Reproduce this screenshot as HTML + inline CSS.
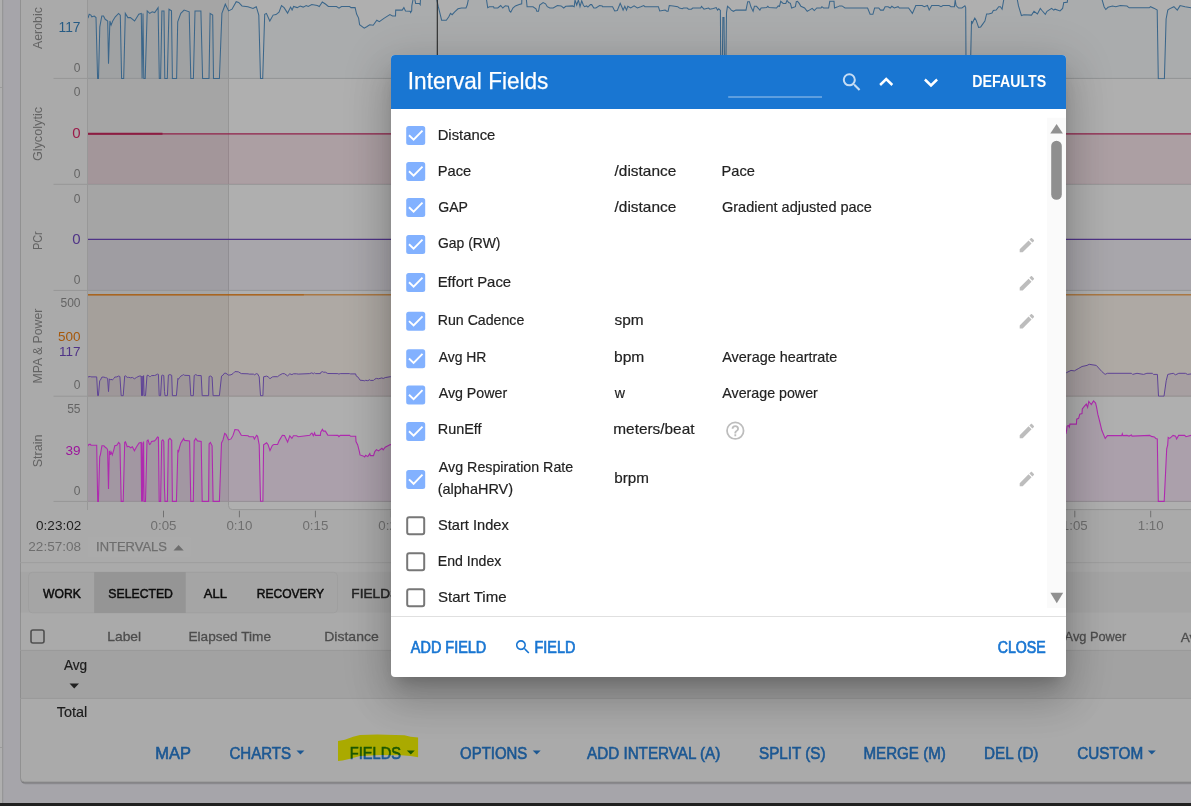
<!DOCTYPE html>
<html><head><meta charset="utf-8"><title>Interval Fields</title>
<style>
html,body{margin:0;padding:0;}
body{width:1191px;height:806px;overflow:hidden;position:relative;font-family:'Liberation Sans', sans-serif;background:#f3f3f8;}
#ov{position:absolute;left:0;top:0;width:1191px;height:806px;background:rgb(33,33,33);opacity:0.36;}
#dlg{position:absolute;left:391px;top:55px;width:675px;height:622px;background:#fff;border-radius:4px;overflow:hidden;
box-shadow:0 11px 15px -7px rgba(0,0,0,.2),0 24px 38px 3px rgba(0,0,0,.14),0 9px 46px 8px rgba(0,0,0,.12);}
#bar{position:absolute;left:0;top:803px;width:1191px;height:3px;background:#202020;}
</style></head><body>
<svg width="1191" height="806" viewBox="0 0 1191 806" style="position:absolute;left:0;top:0;font-family:'Liberation Sans', sans-serif"><defs><clipPath id="c0"><rect x="87.5" y="-30" width="1200" height="109.2"/></clipPath><clipPath id="c1"><rect x="87.5" y="78.4" width="1200" height="105.9"/></clipPath><clipPath id="c2"><rect x="87.5" y="184.3" width="1200" height="106.09999999999997"/></clipPath><clipPath id="c3"><rect x="87.5" y="290.4" width="1200" height="106.40000000000003"/></clipPath><clipPath id="c4"><rect x="87.5" y="396.2" width="1200" height="106.0"/></clipPath></defs><rect x="0" y="0" width="1191" height="806" fill="#f1f0f8"/><rect x="0" y="0" width="2.5" height="806" fill="#ffffff"/><rect x="2.2" y="0" width="1" height="806" fill="#d0d0d0"/><rect x="0" y="87" width="2.2" height="1" fill="#e0e0e0"/><rect x="0" y="747" width="2.2" height="1" fill="#e0e0e0"/><rect x="20.5" y="-19" width="1200" height="802.5" rx="4.5" fill="#000" fill-opacity="0.22"/><rect x="20.5" y="-19" width="1200" height="803.5" rx="5" fill="#000" fill-opacity="0.08"/><rect x="20.5" y="-20" width="1200" height="802" rx="4" fill="#f8f8f8" stroke="#d0d0d0" stroke-width="1"/><rect x="87.5" y="-5" width="140.5" height="506.6" fill="#000" fill-opacity="0.03"/><rect x="228.5" y="-10" width="1000" height="519.6" rx="4" fill="#ffffff" stroke="#d8d8d8" stroke-width="1"/><line x1="53.5" y1="78.4" x2="1195" y2="78.4" stroke="#d8d8d8" stroke-width="1"/><line x1="53.5" y1="184.3" x2="1195" y2="184.3" stroke="#d8d8d8" stroke-width="1"/><line x1="53.5" y1="290.4" x2="1195" y2="290.4" stroke="#d8d8d8" stroke-width="1"/><line x1="53.5" y1="396.2" x2="1195" y2="396.2" stroke="#d8d8d8" stroke-width="1"/><line x1="53.5" y1="501.4" x2="1195" y2="501.4" stroke="#d8d8d8" stroke-width="1"/><g clip-path="url(#c0)"><path d="M86.5,78.9 L86.5,17.6 L88.1,17.6 L89.2,14.3 L90.9,15.1 L91.8,16.8 L94.3,16.0 L96.0,17.6 L97.6,78.4 L98.5,78.4 L99.8,26.9 L101.8,16.0 L103.5,16.0 L105.2,19.3 L107.7,21.0 L108.5,63.8 L109.9,21.0 L111.1,25.2 L112.7,21.0 L115.3,16.8 L118.6,13.4 L120.3,15.1 L121.6,78.4 L123.7,78.4 L125.3,13.4 L127.9,17.6 L130.4,17.6 L134.6,21.0 L138.8,14.3 L141.3,13.4 L142.1,78.4 L143.0,13.4 L143.8,78.4 L145.2,78.4 L147.2,10.9 L149.7,13.4 L152.2,11.8 L154.7,12.6 L158.1,7.6 L159.3,78.4 L160.6,78.4 L161.9,10.9 L164.0,10.9 L164.8,78.4 L167.3,78.4 L169.0,9.2 L171.5,10.9 L172.4,78.4 L176.6,78.4 L177.7,21.8 L180.8,13.4 L184.1,10.1 L189.2,11.8 L190.8,78.4 L193.4,78.4 L195.0,10.9 L200.9,10.9 L202.6,78.4 L209.0,78.4 L210.1,13.4 L212.7,15.1 L213.5,78.4 L219.4,78.4 L221.9,13.4 L225.3,4.2 L228.6,10.9 L232.0,9.2 L236.2,1.7 L238.7,2.5 L242.0,5.9 L247.9,6.7 L253.0,8.4 L256.3,6.7 L258.8,15.1 L260.5,78.4 L262.7,78.4 L264.7,14.3 L266.4,13.4 L269.8,21.0 L273.1,15.1 L276.0,14.6 L279.0,12.1 L281.5,5.5 L284.1,7.6 L287.6,13.1 L290.6,7.1 L292.1,10.1 L293.6,6.5 L297.2,7.6 L300.2,6.0 L303.2,7.1 L306.2,5.5 L308.2,6.5 L311.8,4.5 L317.3,5.5 L319.3,6.5 L322.3,2.0 L325.4,4.0 L328.4,6.5 L336.5,6.5 L339.0,8.1 L341.5,6.5 L349.6,6.5 L351.1,7.6 L355.1,7.6 L356.6,14.1 L358.6,18.1 L359.6,24.7 L364.2,28.2 L366.7,26.7 L369.7,24.7 L373.2,25.2 L376.8,20.2 L379.3,21.7 L384.3,18.1 L389.9,14.6 L392.5,16.0 L395.5,16.0 L395.7,10.1 L402.2,10.1 L403.9,7.6 L405.5,10.9 L410.2,11.3 L410.6,12.6 L411.7,10.9 L411.8,5.9 L413.5,-3.0 L415.2,0.8 L415.6,3.4 L419.4,3.4 L420.2,4.6 L420.6,-3.0 L436.2,-3.0 L438.3,6.7 L440.4,15.1 L441.6,20.2 L446.3,20.2 L448.8,16.8 L450.5,13.4 L452.1,14.7 L454.7,11.8 L458.0,8.8 L461.4,8.0 L466.0,8.0 L467.2,5.0 L468.9,-3.0 L486.1,-3.0 L487.7,7.6 L489.4,6.7 L493.6,6.7 L494.0,8.0 L497.8,8.0 L500.7,5.5 L502.8,8.0 L505.3,5.7 L508.3,6.3 L509.5,10.9 L510.8,12.2 L512.9,8.0 L515.4,5.9 L519.2,4.6 L521.7,3.8 L521.9,-3.0 L526.1,-3.0 L527.1,6.7 L533.0,6.7 L536.0,8.8 L536.8,11.3 L538.5,11.3 L539.7,5.0 L543.1,2.5 L545.6,3.8 L547.3,6.7 L549.8,8.0 L553.2,8.0 L557.4,5.5 L561.1,5.9 L563.7,8.0 L565.8,6.3 L572.5,5.9 L574.2,6.7 L575.0,0.0 L576.7,5.0 L578.4,0.0 L580.0,6.7 L581.7,0.8 L583.3,5.0 L584.5,6.7 L586.6,5.9 L587.9,7.1 L590.4,4.6 L591.7,4.6 L593.8,8.0 L595.9,8.0 L599.6,5.5 L602.2,5.9 L602.6,6.7 L612.6,6.7 L614.7,10.9 L617.3,10.5 L620.2,3.4 L622.3,8.0 L623.1,10.1 L624.8,6.3 L626.5,10.1 L627.8,6.3 L630.7,8.0 L634.1,5.9 L637.4,8.0 L640.8,6.7 L643.7,5.5 L645.0,6.7 L658.4,6.7 L659.7,10.9 L662.6,10.5 L665.1,10.1 L666.8,11.3 L668.1,11.3 L669.3,5.5 L673.1,5.9 L677.7,6.7 L679.4,8.0 L682.2,8.8 L683.5,8.0 L687.2,8.0 L688.5,9.2 L691.4,9.2 L692.7,8.0 L700.7,8.0 L701.5,6.5 L704.0,9.2 L706.5,8.4 L708.6,8.0 L709.9,9.2 L713.3,8.4 L716.2,7.6 L717.5,10.1 L718.7,8.8 L720.4,10.5 L720.8,78.9 L722.1,78.9 L722.9,17.6 L724.0,17.6 L724.6,78.9 L725.7,78.9 L726.5,12.6 L727.5,6.3 L729.6,8.0 L731.3,10.1 L733.4,11.3 L735.9,10.1 L746.0,10.1 L747.7,1.7 L749.4,1.7 L751.0,7.1 L753.1,11.3 L754.4,6.3 L756.5,6.3 L759.9,10.1 L761.1,8.0 L766.6,7.6 L767.8,6.3 L769.1,7.6 L776.5,8.0 L778.2,5.9 L779.5,6.3 L780.7,1.3 L783.2,3.4 L785.8,3.4 L787.0,0.4 L788.7,2.5 L790.4,3.4 L791.6,8.0 L795.4,6.7 L796.3,1.7 L797.5,1.3 L799.2,3.4 L800.9,6.3 L804.6,8.0 L807.2,11.3 L809.3,10.1 L812.2,8.4 L814.3,10.5 L816.8,8.0 L821.0,8.0 L821.9,6.7 L823.5,8.0 L828.6,8.0 L829.8,1.3 L834.0,1.3 L834.5,8.0 L837.0,7.1 L839.5,5.9 L842.0,5.9 L845.0,8.0 L867.6,8.0 L870.1,14.3 L872.9,14.3 L874.6,8.0 L878.8,8.0 L880.5,10.1 L883.4,10.1 L885.1,6.7 L888.1,6.7 L890.2,8.0 L891.8,6.3 L894.3,8.0 L898.1,6.7 L899.4,8.0 L908.6,8.0 L912.4,13.4 L915.3,6.7 L915.8,5.5 L922.1,5.5 L924.2,6.7 L927.5,5.5 L929.2,10.1 L931.7,5.5 L938.8,5.5 L941.0,6.7 L943.0,5.5 L949.3,5.5 L951.0,6.7 L954.4,6.7 L955.2,0.0 L956.1,5.5 L958.6,8.0 L961.9,8.0 L964.9,5.9 L965.7,7.6 L966.1,78.9 L970.2,78.9 L971.5,21.0 L972.3,23.1 L974.8,18.1 L976.1,20.2 L978.6,27.3 L980.7,26.9 L984.9,21.0 L986.6,13.9 L988.7,13.9 L992.0,13.0 L993.3,10.5 L996.2,10.1 L998.7,6.7 L1000.4,6.7 L1002.1,9.2 L1003.4,1.7 L1004.2,-3.0 L1016.8,-3.0 L1018.5,5.9 L1021.4,15.5 L1023.9,14.7 L1031.5,15.1 L1034.0,11.3 L1037.4,13.9 L1040.3,8.4 L1042.0,10.5 L1045.3,14.3 L1047.0,11.3 L1051.6,8.4 L1053.7,10.1 L1055.0,9.2 L1060.0,10.9 L1062.6,8.4 L1063.8,2.5 L1066.0,2.5 L1066.0,2.2 L1067.3,2.2 L1067.8,-3.0 L1101.3,-3.0 L1104.1,6.7 L1105.8,9.5 L1108.0,7.3 L1112.5,6.1 L1115.8,6.7 L1120.3,5.6 L1127.0,6.1 L1129.2,7.8 L1149.3,7.8 L1150.5,6.7 L1154.4,8.4 L1157.2,10.1 L1158.3,78.7 L1164.4,78.7 L1166.1,19.0 L1167.8,10.1 L1169.4,8.9 L1173.9,6.7 L1177.3,10.1 L1180.1,5.6 L1185.1,6.7 L1191.0,7.8 L1196.0,7.8 L1196.0,78.9 Z" fill="#1f6fb0" fill-opacity="0.035"/><path d="M86.5,17.6 L88.1,17.6 L89.2,14.3 L90.9,15.1 L91.8,16.8 L94.3,16.0 L96.0,17.6 L97.6,78.4 L98.5,78.4 L99.8,26.9 L101.8,16.0 L103.5,16.0 L105.2,19.3 L107.7,21.0 L108.5,63.8 L109.9,21.0 L111.1,25.2 L112.7,21.0 L115.3,16.8 L118.6,13.4 L120.3,15.1 L121.6,78.4 L123.7,78.4 L125.3,13.4 L127.9,17.6 L130.4,17.6 L134.6,21.0 L138.8,14.3 L141.3,13.4 L142.1,78.4 L143.0,13.4 L143.8,78.4 L145.2,78.4 L147.2,10.9 L149.7,13.4 L152.2,11.8 L154.7,12.6 L158.1,7.6 L159.3,78.4 L160.6,78.4 L161.9,10.9 L164.0,10.9 L164.8,78.4 L167.3,78.4 L169.0,9.2 L171.5,10.9 L172.4,78.4 L176.6,78.4 L177.7,21.8 L180.8,13.4 L184.1,10.1 L189.2,11.8 L190.8,78.4 L193.4,78.4 L195.0,10.9 L200.9,10.9 L202.6,78.4 L209.0,78.4 L210.1,13.4 L212.7,15.1 L213.5,78.4 L219.4,78.4 L221.9,13.4 L225.3,4.2 L228.6,10.9 L232.0,9.2 L236.2,1.7 L238.7,2.5 L242.0,5.9 L247.9,6.7 L253.0,8.4 L256.3,6.7 L258.8,15.1 L260.5,78.4 L262.7,78.4 L264.7,14.3 L266.4,13.4 L269.8,21.0 L273.1,15.1 L276.0,14.6 L279.0,12.1 L281.5,5.5 L284.1,7.6 L287.6,13.1 L290.6,7.1 L292.1,10.1 L293.6,6.5 L297.2,7.6 L300.2,6.0 L303.2,7.1 L306.2,5.5 L308.2,6.5 L311.8,4.5 L317.3,5.5 L319.3,6.5 L322.3,2.0 L325.4,4.0 L328.4,6.5 L336.5,6.5 L339.0,8.1 L341.5,6.5 L349.6,6.5 L351.1,7.6 L355.1,7.6 L356.6,14.1 L358.6,18.1 L359.6,24.7 L364.2,28.2 L366.7,26.7 L369.7,24.7 L373.2,25.2 L376.8,20.2 L379.3,21.7 L384.3,18.1 L389.9,14.6 L392.5,16.0 L395.5,16.0 L395.7,10.1 L402.2,10.1 L403.9,7.6 L405.5,10.9 L410.2,11.3 L410.6,12.6 L411.7,10.9 L411.8,5.9 L413.5,-3.0 L415.2,0.8 L415.6,3.4 L419.4,3.4 L420.2,4.6 L420.6,-3.0 L436.2,-3.0 L438.3,6.7 L440.4,15.1 L441.6,20.2 L446.3,20.2 L448.8,16.8 L450.5,13.4 L452.1,14.7 L454.7,11.8 L458.0,8.8 L461.4,8.0 L466.0,8.0 L467.2,5.0 L468.9,-3.0 L486.1,-3.0 L487.7,7.6 L489.4,6.7 L493.6,6.7 L494.0,8.0 L497.8,8.0 L500.7,5.5 L502.8,8.0 L505.3,5.7 L508.3,6.3 L509.5,10.9 L510.8,12.2 L512.9,8.0 L515.4,5.9 L519.2,4.6 L521.7,3.8 L521.9,-3.0 L526.1,-3.0 L527.1,6.7 L533.0,6.7 L536.0,8.8 L536.8,11.3 L538.5,11.3 L539.7,5.0 L543.1,2.5 L545.6,3.8 L547.3,6.7 L549.8,8.0 L553.2,8.0 L557.4,5.5 L561.1,5.9 L563.7,8.0 L565.8,6.3 L572.5,5.9 L574.2,6.7 L575.0,0.0 L576.7,5.0 L578.4,0.0 L580.0,6.7 L581.7,0.8 L583.3,5.0 L584.5,6.7 L586.6,5.9 L587.9,7.1 L590.4,4.6 L591.7,4.6 L593.8,8.0 L595.9,8.0 L599.6,5.5 L602.2,5.9 L602.6,6.7 L612.6,6.7 L614.7,10.9 L617.3,10.5 L620.2,3.4 L622.3,8.0 L623.1,10.1 L624.8,6.3 L626.5,10.1 L627.8,6.3 L630.7,8.0 L634.1,5.9 L637.4,8.0 L640.8,6.7 L643.7,5.5 L645.0,6.7 L658.4,6.7 L659.7,10.9 L662.6,10.5 L665.1,10.1 L666.8,11.3 L668.1,11.3 L669.3,5.5 L673.1,5.9 L677.7,6.7 L679.4,8.0 L682.2,8.8 L683.5,8.0 L687.2,8.0 L688.5,9.2 L691.4,9.2 L692.7,8.0 L700.7,8.0 L701.5,6.5 L704.0,9.2 L706.5,8.4 L708.6,8.0 L709.9,9.2 L713.3,8.4 L716.2,7.6 L717.5,10.1 L718.7,8.8 L720.4,10.5 L720.8,78.9 L722.1,78.9 L722.9,17.6 L724.0,17.6 L724.6,78.9 L725.7,78.9 L726.5,12.6 L727.5,6.3 L729.6,8.0 L731.3,10.1 L733.4,11.3 L735.9,10.1 L746.0,10.1 L747.7,1.7 L749.4,1.7 L751.0,7.1 L753.1,11.3 L754.4,6.3 L756.5,6.3 L759.9,10.1 L761.1,8.0 L766.6,7.6 L767.8,6.3 L769.1,7.6 L776.5,8.0 L778.2,5.9 L779.5,6.3 L780.7,1.3 L783.2,3.4 L785.8,3.4 L787.0,0.4 L788.7,2.5 L790.4,3.4 L791.6,8.0 L795.4,6.7 L796.3,1.7 L797.5,1.3 L799.2,3.4 L800.9,6.3 L804.6,8.0 L807.2,11.3 L809.3,10.1 L812.2,8.4 L814.3,10.5 L816.8,8.0 L821.0,8.0 L821.9,6.7 L823.5,8.0 L828.6,8.0 L829.8,1.3 L834.0,1.3 L834.5,8.0 L837.0,7.1 L839.5,5.9 L842.0,5.9 L845.0,8.0 L867.6,8.0 L870.1,14.3 L872.9,14.3 L874.6,8.0 L878.8,8.0 L880.5,10.1 L883.4,10.1 L885.1,6.7 L888.1,6.7 L890.2,8.0 L891.8,6.3 L894.3,8.0 L898.1,6.7 L899.4,8.0 L908.6,8.0 L912.4,13.4 L915.3,6.7 L915.8,5.5 L922.1,5.5 L924.2,6.7 L927.5,5.5 L929.2,10.1 L931.7,5.5 L938.8,5.5 L941.0,6.7 L943.0,5.5 L949.3,5.5 L951.0,6.7 L954.4,6.7 L955.2,0.0 L956.1,5.5 L958.6,8.0 L961.9,8.0 L964.9,5.9 L965.7,7.6 L966.1,78.9 L970.2,78.9 L971.5,21.0 L972.3,23.1 L974.8,18.1 L976.1,20.2 L978.6,27.3 L980.7,26.9 L984.9,21.0 L986.6,13.9 L988.7,13.9 L992.0,13.0 L993.3,10.5 L996.2,10.1 L998.7,6.7 L1000.4,6.7 L1002.1,9.2 L1003.4,1.7 L1004.2,-3.0 L1016.8,-3.0 L1018.5,5.9 L1021.4,15.5 L1023.9,14.7 L1031.5,15.1 L1034.0,11.3 L1037.4,13.9 L1040.3,8.4 L1042.0,10.5 L1045.3,14.3 L1047.0,11.3 L1051.6,8.4 L1053.7,10.1 L1055.0,9.2 L1060.0,10.9 L1062.6,8.4 L1063.8,2.5 L1066.0,2.5 L1066.0,2.2 L1067.3,2.2 L1067.8,-3.0 L1101.3,-3.0 L1104.1,6.7 L1105.8,9.5 L1108.0,7.3 L1112.5,6.1 L1115.8,6.7 L1120.3,5.6 L1127.0,6.1 L1129.2,7.8 L1149.3,7.8 L1150.5,6.7 L1154.4,8.4 L1157.2,10.1 L1158.3,78.7 L1164.4,78.7 L1166.1,19.0 L1167.8,10.1 L1169.4,8.9 L1173.9,6.7 L1177.3,10.1 L1180.1,5.6 L1185.1,6.7 L1191.0,7.8 L1196.0,7.8" fill="none" stroke="#4a8ec6" stroke-width="1.05"/></g><g clip-path="url(#c1)"><rect x="87.5" y="133.8" width="1200" height="50.5" fill="#e0306a" fill-opacity="0.12"/><line x1="87.5" y1="133.8" x2="1195" y2="133.8" stroke="#d02060" stroke-width="1.2"/><line x1="87.5" y1="133.8" x2="162.5" y2="133.8" stroke="#c81a55" stroke-width="2"/></g><g clip-path="url(#c2)"><rect x="87.5" y="239.4" width="1200" height="51" fill="#5e35b1" fill-opacity="0.07"/><line x1="87.5" y1="239.4" x2="1195" y2="239.4" stroke="#6a3fc0" stroke-width="1.3"/></g><g clip-path="url(#c3)"><rect x="87.5" y="294.7" width="1200" height="102" fill="#f08020" fill-opacity="0.075"/><path d="M86.5,396.2 L86.5,377.1 L88.0,377.1 L89.0,376.6 L90.5,376.6 L91.0,376.9 L96.7,376.9 L97.7,395.7 L98.4,395.7 L99.7,380.8 L100.4,380.1 L101.9,377.1 L103.9,377.1 L105.3,377.6 L106.8,377.9 L107.6,378.4 L108.5,391.6 L109.3,378.8 L110.3,380.1 L111.0,379.1 L112.3,380.1 L113.8,378.4 L114.8,377.1 L116.8,376.9 L118.7,376.0 L119.9,376.5 L121.2,395.7 L123.2,395.7 L124.7,376.0 L125.5,375.8 L127.2,377.4 L128.7,377.3 L130.7,377.8 L132.4,377.4 L134.4,378.8 L136.6,377.4 L139.1,376.1 L141.1,376.0 L141.6,395.7 L142.1,376.0 L142.6,395.7 L143.6,375.6 L144.1,395.7 L145.5,395.7 L147.0,375.5 L148.0,375.1 L149.5,376.6 L150.5,376.5 L151.5,375.6 L154.5,375.5 L156.0,375.0 L157.5,374.1 L158.4,374.3 L159.2,395.7 L160.6,395.7 L161.7,375.5 L162.8,375.1 L163.8,375.6 L164.5,391.4 L165.0,395.7 L167.4,395.7 L168.4,375.1 L169.9,374.6 L171.7,375.3 L172.4,395.7 L176.4,395.7 L177.9,378.4 L178.4,379.3 L179.4,377.8 L180.8,376.1 L182.8,375.1 L183.6,374.6 L184.6,375.3 L189.6,375.5 L190.8,395.7 L193.3,395.7 L194.2,375.5 L195.7,374.6 L197.5,375.5 L201.2,375.6 L202.2,395.7 L208.6,395.7 L209.1,376.5 L210.4,376.0 L212.1,377.1 L213.1,395.7 L219.4,395.7 L221.5,376.1 L223.0,375.1 L224.7,373.0 L226.0,373.3 L228.5,375.1 L231.0,374.8 L233.0,373.6 L234.9,371.6 L238.3,371.8 L241.3,373.6 L248.1,373.8 L249.2,374.1 L253.4,374.1 L254.4,374.8 L256.6,373.6 L257.6,373.9 L259.2,376.8 L260.5,395.7 L262.9,395.7 L263.6,376.8 L266.6,376.1 L268.1,376.8 L270.0,378.7 L272.4,376.9 L273.9,376.7 L277.6,376.7 L279.2,375.4 L282.4,373.6 L284.5,373.7 L287.6,375.9 L289.8,373.8 L291.9,374.6 L293.4,373.8 L296.6,373.8 L298.2,374.1 L309.8,373.6 L311.4,372.9 L312.0,372.9 L313.3,373.8 L314.6,372.8 L315.4,373.6 L320.4,373.6 L320.7,372.5 L322.4,371.6 L323.4,372.2 L325.4,372.2 L327.8,373.5 L337.9,373.6 L338.9,374.1 L340.2,373.6 L349.6,373.6 L350.6,373.9 L355.7,373.9 L356.0,375.7 L357.7,376.8 L359.4,379.1 L360.0,380.2 L363.1,380.5 L364.7,380.8 L365.7,380.3 L367.8,380.7 L369.8,379.7 L370.4,380.4 L373.5,380.4 L374.8,379.1 L376.5,378.4 L378.5,378.8 L381.9,377.9 L383.2,378.5 L385.2,377.6 L390.3,376.7 L392.5,377.0 L395.5,377.0 L395.7,375.2 L402.2,375.2 L403.9,374.5 L405.5,375.5 L410.2,375.6 L410.6,376.0 L411.7,375.5 L411.8,374.0 L413.5,371.3 L415.2,372.4 L415.6,373.2 L419.4,373.2 L420.2,373.6 L420.6,371.3 L436.2,371.3 L438.3,374.2 L440.4,376.7 L441.6,378.2 L446.3,378.2 L448.8,377.2 L450.5,376.2 L452.1,376.6 L454.7,375.7 L458.0,374.8 L461.4,374.6 L466.0,374.6 L467.2,373.7 L468.9,371.3 L486.1,371.3 L487.7,374.5 L489.4,374.2 L493.6,374.2 L494.0,374.6 L497.8,374.6 L500.7,373.8 L502.8,374.6 L505.3,373.9 L508.3,374.1 L509.5,375.5 L510.8,375.8 L512.9,374.6 L515.4,374.0 L519.2,373.6 L521.7,373.3 L521.9,371.3 L526.1,371.3 L527.1,374.2 L533.0,374.2 L536.0,374.8 L536.8,375.6 L538.5,375.6 L539.7,373.7 L543.1,372.9 L545.6,373.3 L547.3,374.2 L549.8,374.6 L553.2,374.6 L557.4,373.8 L561.1,374.0 L563.7,374.6 L565.8,374.1 L572.5,374.0 L574.2,374.2 L575.0,372.2 L576.7,373.7 L578.4,372.2 L580.0,374.2 L581.7,372.4 L583.3,373.7 L584.5,374.2 L586.6,374.0 L587.9,374.3 L590.4,373.6 L591.7,373.6 L593.8,374.6 L595.9,374.6 L599.6,373.8 L602.2,374.0 L602.6,374.2 L612.6,374.2 L614.7,375.5 L617.3,375.3 L620.2,373.2 L622.3,374.6 L623.1,375.2 L624.8,374.1 L626.5,375.2 L627.8,374.1 L630.7,374.6 L634.1,374.0 L637.4,374.6 L640.8,374.2 L643.7,373.8 L645.0,374.2 L658.4,374.2 L659.7,375.5 L662.6,375.3 L665.1,375.2 L666.8,375.6 L668.1,375.6 L669.3,373.8 L673.1,374.0 L677.7,374.2 L679.4,374.6 L682.2,374.8 L683.5,374.6 L687.2,374.6 L688.5,375.0 L691.4,375.0 L692.7,374.6 L700.7,374.6 L701.5,374.1 L704.0,375.0 L706.5,374.7 L708.6,374.6 L709.9,375.0 L713.3,374.7 L716.2,374.5 L717.5,375.2 L718.7,374.8 L720.4,375.3 L720.8,395.8 L722.1,395.8 L722.9,377.5 L724.0,377.5 L724.6,395.8 L725.7,395.8 L726.5,376.0 L727.5,374.1 L729.6,374.6 L731.3,375.2 L733.4,375.6 L735.9,375.2 L746.0,375.2 L747.7,372.7 L749.4,372.7 L751.0,374.3 L753.1,375.6 L754.4,374.1 L756.5,374.1 L759.9,375.2 L761.1,374.6 L766.6,374.5 L767.8,374.1 L769.1,374.5 L776.5,374.6 L778.2,374.0 L779.5,374.1 L780.7,372.6 L783.2,373.2 L785.8,373.2 L787.0,372.3 L788.7,372.9 L790.4,373.2 L791.6,374.6 L795.4,374.2 L796.3,372.7 L797.5,372.6 L799.2,373.2 L800.9,374.1 L804.6,374.6 L807.2,375.6 L809.3,375.2 L812.2,374.7 L814.3,375.3 L816.8,374.6 L821.0,374.6 L821.9,374.2 L823.5,374.6 L828.6,374.6 L829.8,372.6 L834.0,372.6 L834.5,374.6 L837.0,374.3 L839.5,374.0 L842.0,374.0 L845.0,374.6 L867.6,374.6 L870.1,376.5 L872.9,376.5 L874.6,374.6 L878.8,374.6 L880.5,375.2 L883.4,375.2 L885.1,374.2 L888.1,374.2 L890.2,374.6 L891.8,374.1 L894.3,374.6 L898.1,374.2 L899.4,374.6 L908.6,374.6 L912.4,376.2 L915.3,374.2 L915.8,373.8 L922.1,373.8 L924.2,374.2 L927.5,373.8 L929.2,375.2 L931.7,373.8 L938.8,373.8 L941.0,374.2 L943.0,373.8 L949.3,373.8 L951.0,374.2 L954.4,374.2 L955.2,372.2 L956.1,373.8 L958.6,374.6 L961.9,374.6 L964.9,374.0 L965.7,374.5 L966.1,395.8 L970.2,395.8 L971.5,378.5 L972.3,379.1 L974.8,377.6 L976.1,378.2 L978.6,380.4 L980.7,380.2 L984.9,378.5 L986.6,376.4 L988.7,376.4 L992.0,376.1 L993.3,375.3 L996.2,375.2 L998.7,374.2 L1000.4,374.2 L1002.1,375.0 L1003.4,372.7 L1004.2,371.3 L1016.8,371.3 L1018.5,374.0 L1021.4,376.8 L1023.9,376.6 L1031.5,376.7 L1034.0,375.6 L1037.4,376.4 L1040.3,374.7 L1042.0,375.3 L1045.3,376.5 L1047.0,375.6 L1051.6,374.7 L1053.7,375.2 L1055.0,375.0 L1060.0,375.5 L1062.6,374.7 L1063.8,372.9 L1066.0,372.9 L1066.6,372.6 L1071.0,370.4 L1074.3,370.9 L1078.2,368.7 L1082.0,366.5 L1087.0,365.4 L1089.2,364.3 L1093.0,364.9 L1096.3,365.4 L1101.8,371.5 L1105.1,374.4 L1107.3,373.3 L1131.5,373.3 L1132.6,374.4 L1137.0,373.3 L1143.6,374.4 L1146.9,373.3 L1152.4,373.3 L1153.5,374.4 L1157.4,374.4 L1158.5,396.2 L1164.0,396.2 L1166.2,380.8 L1167.8,374.4 L1171.1,373.7 L1173.3,373.3 L1175.5,374.8 L1178.8,373.3 L1185.4,373.3 L1187.6,374.4 L1196.0,373.3 L1196.0,396.2 Z" fill="#6a3fc0" fill-opacity="0.08"/><line x1="87.5" y1="294.7" x2="1195" y2="294.7" stroke="#f57c00" stroke-opacity="0.65" stroke-width="1.6"/><line x1="87.5" y1="294.7" x2="303.9" y2="294.7" stroke="#f57c00" stroke-opacity="0.6" stroke-width="1.6"/><path d="M86.5,377.1 L88.0,377.1 L89.0,376.6 L90.5,376.6 L91.0,376.9 L96.7,376.9 L97.7,395.7 L98.4,395.7 L99.7,380.8 L100.4,380.1 L101.9,377.1 L103.9,377.1 L105.3,377.6 L106.8,377.9 L107.6,378.4 L108.5,391.6 L109.3,378.8 L110.3,380.1 L111.0,379.1 L112.3,380.1 L113.8,378.4 L114.8,377.1 L116.8,376.9 L118.7,376.0 L119.9,376.5 L121.2,395.7 L123.2,395.7 L124.7,376.0 L125.5,375.8 L127.2,377.4 L128.7,377.3 L130.7,377.8 L132.4,377.4 L134.4,378.8 L136.6,377.4 L139.1,376.1 L141.1,376.0 L141.6,395.7 L142.1,376.0 L142.6,395.7 L143.6,375.6 L144.1,395.7 L145.5,395.7 L147.0,375.5 L148.0,375.1 L149.5,376.6 L150.5,376.5 L151.5,375.6 L154.5,375.5 L156.0,375.0 L157.5,374.1 L158.4,374.3 L159.2,395.7 L160.6,395.7 L161.7,375.5 L162.8,375.1 L163.8,375.6 L164.5,391.4 L165.0,395.7 L167.4,395.7 L168.4,375.1 L169.9,374.6 L171.7,375.3 L172.4,395.7 L176.4,395.7 L177.9,378.4 L178.4,379.3 L179.4,377.8 L180.8,376.1 L182.8,375.1 L183.6,374.6 L184.6,375.3 L189.6,375.5 L190.8,395.7 L193.3,395.7 L194.2,375.5 L195.7,374.6 L197.5,375.5 L201.2,375.6 L202.2,395.7 L208.6,395.7 L209.1,376.5 L210.4,376.0 L212.1,377.1 L213.1,395.7 L219.4,395.7 L221.5,376.1 L223.0,375.1 L224.7,373.0 L226.0,373.3 L228.5,375.1 L231.0,374.8 L233.0,373.6 L234.9,371.6 L238.3,371.8 L241.3,373.6 L248.1,373.8 L249.2,374.1 L253.4,374.1 L254.4,374.8 L256.6,373.6 L257.6,373.9 L259.2,376.8 L260.5,395.7 L262.9,395.7 L263.6,376.8 L266.6,376.1 L268.1,376.8 L270.0,378.7 L272.4,376.9 L273.9,376.7 L277.6,376.7 L279.2,375.4 L282.4,373.6 L284.5,373.7 L287.6,375.9 L289.8,373.8 L291.9,374.6 L293.4,373.8 L296.6,373.8 L298.2,374.1 L309.8,373.6 L311.4,372.9 L312.0,372.9 L313.3,373.8 L314.6,372.8 L315.4,373.6 L320.4,373.6 L320.7,372.5 L322.4,371.6 L323.4,372.2 L325.4,372.2 L327.8,373.5 L337.9,373.6 L338.9,374.1 L340.2,373.6 L349.6,373.6 L350.6,373.9 L355.7,373.9 L356.0,375.7 L357.7,376.8 L359.4,379.1 L360.0,380.2 L363.1,380.5 L364.7,380.8 L365.7,380.3 L367.8,380.7 L369.8,379.7 L370.4,380.4 L373.5,380.4 L374.8,379.1 L376.5,378.4 L378.5,378.8 L381.9,377.9 L383.2,378.5 L385.2,377.6 L390.3,376.7 L392.5,377.0 L395.5,377.0 L395.7,375.2 L402.2,375.2 L403.9,374.5 L405.5,375.5 L410.2,375.6 L410.6,376.0 L411.7,375.5 L411.8,374.0 L413.5,371.3 L415.2,372.4 L415.6,373.2 L419.4,373.2 L420.2,373.6 L420.6,371.3 L436.2,371.3 L438.3,374.2 L440.4,376.7 L441.6,378.2 L446.3,378.2 L448.8,377.2 L450.5,376.2 L452.1,376.6 L454.7,375.7 L458.0,374.8 L461.4,374.6 L466.0,374.6 L467.2,373.7 L468.9,371.3 L486.1,371.3 L487.7,374.5 L489.4,374.2 L493.6,374.2 L494.0,374.6 L497.8,374.6 L500.7,373.8 L502.8,374.6 L505.3,373.9 L508.3,374.1 L509.5,375.5 L510.8,375.8 L512.9,374.6 L515.4,374.0 L519.2,373.6 L521.7,373.3 L521.9,371.3 L526.1,371.3 L527.1,374.2 L533.0,374.2 L536.0,374.8 L536.8,375.6 L538.5,375.6 L539.7,373.7 L543.1,372.9 L545.6,373.3 L547.3,374.2 L549.8,374.6 L553.2,374.6 L557.4,373.8 L561.1,374.0 L563.7,374.6 L565.8,374.1 L572.5,374.0 L574.2,374.2 L575.0,372.2 L576.7,373.7 L578.4,372.2 L580.0,374.2 L581.7,372.4 L583.3,373.7 L584.5,374.2 L586.6,374.0 L587.9,374.3 L590.4,373.6 L591.7,373.6 L593.8,374.6 L595.9,374.6 L599.6,373.8 L602.2,374.0 L602.6,374.2 L612.6,374.2 L614.7,375.5 L617.3,375.3 L620.2,373.2 L622.3,374.6 L623.1,375.2 L624.8,374.1 L626.5,375.2 L627.8,374.1 L630.7,374.6 L634.1,374.0 L637.4,374.6 L640.8,374.2 L643.7,373.8 L645.0,374.2 L658.4,374.2 L659.7,375.5 L662.6,375.3 L665.1,375.2 L666.8,375.6 L668.1,375.6 L669.3,373.8 L673.1,374.0 L677.7,374.2 L679.4,374.6 L682.2,374.8 L683.5,374.6 L687.2,374.6 L688.5,375.0 L691.4,375.0 L692.7,374.6 L700.7,374.6 L701.5,374.1 L704.0,375.0 L706.5,374.7 L708.6,374.6 L709.9,375.0 L713.3,374.7 L716.2,374.5 L717.5,375.2 L718.7,374.8 L720.4,375.3 L720.8,395.8 L722.1,395.8 L722.9,377.5 L724.0,377.5 L724.6,395.8 L725.7,395.8 L726.5,376.0 L727.5,374.1 L729.6,374.6 L731.3,375.2 L733.4,375.6 L735.9,375.2 L746.0,375.2 L747.7,372.7 L749.4,372.7 L751.0,374.3 L753.1,375.6 L754.4,374.1 L756.5,374.1 L759.9,375.2 L761.1,374.6 L766.6,374.5 L767.8,374.1 L769.1,374.5 L776.5,374.6 L778.2,374.0 L779.5,374.1 L780.7,372.6 L783.2,373.2 L785.8,373.2 L787.0,372.3 L788.7,372.9 L790.4,373.2 L791.6,374.6 L795.4,374.2 L796.3,372.7 L797.5,372.6 L799.2,373.2 L800.9,374.1 L804.6,374.6 L807.2,375.6 L809.3,375.2 L812.2,374.7 L814.3,375.3 L816.8,374.6 L821.0,374.6 L821.9,374.2 L823.5,374.6 L828.6,374.6 L829.8,372.6 L834.0,372.6 L834.5,374.6 L837.0,374.3 L839.5,374.0 L842.0,374.0 L845.0,374.6 L867.6,374.6 L870.1,376.5 L872.9,376.5 L874.6,374.6 L878.8,374.6 L880.5,375.2 L883.4,375.2 L885.1,374.2 L888.1,374.2 L890.2,374.6 L891.8,374.1 L894.3,374.6 L898.1,374.2 L899.4,374.6 L908.6,374.6 L912.4,376.2 L915.3,374.2 L915.8,373.8 L922.1,373.8 L924.2,374.2 L927.5,373.8 L929.2,375.2 L931.7,373.8 L938.8,373.8 L941.0,374.2 L943.0,373.8 L949.3,373.8 L951.0,374.2 L954.4,374.2 L955.2,372.2 L956.1,373.8 L958.6,374.6 L961.9,374.6 L964.9,374.0 L965.7,374.5 L966.1,395.8 L970.2,395.8 L971.5,378.5 L972.3,379.1 L974.8,377.6 L976.1,378.2 L978.6,380.4 L980.7,380.2 L984.9,378.5 L986.6,376.4 L988.7,376.4 L992.0,376.1 L993.3,375.3 L996.2,375.2 L998.7,374.2 L1000.4,374.2 L1002.1,375.0 L1003.4,372.7 L1004.2,371.3 L1016.8,371.3 L1018.5,374.0 L1021.4,376.8 L1023.9,376.6 L1031.5,376.7 L1034.0,375.6 L1037.4,376.4 L1040.3,374.7 L1042.0,375.3 L1045.3,376.5 L1047.0,375.6 L1051.6,374.7 L1053.7,375.2 L1055.0,375.0 L1060.0,375.5 L1062.6,374.7 L1063.8,372.9 L1066.0,372.9 L1066.6,372.6 L1071.0,370.4 L1074.3,370.9 L1078.2,368.7 L1082.0,366.5 L1087.0,365.4 L1089.2,364.3 L1093.0,364.9 L1096.3,365.4 L1101.8,371.5 L1105.1,374.4 L1107.3,373.3 L1131.5,373.3 L1132.6,374.4 L1137.0,373.3 L1143.6,374.4 L1146.9,373.3 L1152.4,373.3 L1153.5,374.4 L1157.4,374.4 L1158.5,396.2 L1164.0,396.2 L1166.2,380.8 L1167.8,374.4 L1171.1,373.7 L1173.3,373.3 L1175.5,374.8 L1178.8,373.3 L1185.4,373.3 L1187.6,374.4 L1196.0,373.3" fill="none" stroke="#8258d8" stroke-width="1"/></g><g clip-path="url(#c4)"><path d="M86.5,501.6 L86.5,445.8 L88.0,445.8 L89.0,444.4 L90.5,444.4 L91.0,445.3 L96.7,445.3 L97.7,501.4 L98.4,501.4 L99.7,456.8 L100.4,454.8 L101.9,445.8 L103.9,445.8 L105.3,447.3 L106.8,448.3 L107.6,449.8 L108.5,489.0 L109.3,450.8 L110.3,454.8 L111.0,451.8 L112.3,454.8 L113.8,449.8 L114.8,445.8 L116.8,445.3 L118.7,442.4 L119.9,443.9 L121.2,501.4 L123.2,501.4 L124.7,442.4 L125.5,441.9 L127.2,446.8 L128.7,446.3 L130.7,447.8 L132.4,446.8 L134.4,450.8 L136.6,446.8 L139.1,442.9 L141.1,442.4 L141.6,501.4 L142.1,442.4 L142.6,501.4 L143.6,441.4 L144.1,501.4 L145.5,501.4 L147.0,440.9 L148.0,439.9 L149.5,444.4 L150.5,443.9 L151.5,441.4 L154.5,440.9 L156.0,439.4 L157.5,436.9 L158.4,437.4 L159.2,501.4 L160.6,501.4 L161.7,440.9 L162.8,439.9 L163.8,441.4 L164.5,488.5 L165.0,501.4 L167.4,501.4 L168.4,439.9 L169.9,438.4 L171.7,440.4 L172.4,501.4 L176.4,501.4 L177.9,449.8 L178.4,452.3 L179.4,447.8 L180.8,442.9 L182.8,439.9 L183.6,438.4 L184.6,440.4 L189.6,440.9 L190.8,501.4 L193.3,501.4 L194.2,440.9 L195.7,438.4 L197.5,440.9 L201.2,441.4 L202.2,501.4 L208.6,501.4 L209.1,443.9 L210.4,442.4 L212.1,445.8 L213.1,501.4 L219.4,501.4 L221.5,442.9 L223.0,439.9 L224.7,433.4 L226.0,434.4 L228.5,439.9 L231.0,438.9 L233.0,435.4 L234.9,429.5 L238.3,430.0 L241.3,435.3 L248.1,435.8 L249.2,436.7 L253.4,436.7 L254.4,439.0 L256.6,435.3 L257.6,436.3 L259.2,444.8 L260.5,501.2 L262.9,501.2 L263.6,444.8 L266.6,442.7 L268.1,444.8 L270.0,450.6 L272.4,445.3 L273.9,444.5 L277.6,444.5 L279.2,440.6 L282.4,435.3 L284.5,435.6 L287.6,442.1 L289.8,435.8 L291.9,438.4 L293.4,435.8 L296.6,435.8 L298.2,436.7 L309.8,435.3 L311.4,433.2 L312.0,433.1 L313.3,435.8 L314.6,432.8 L315.4,435.4 L320.4,435.4 L320.7,432.1 L322.4,429.4 L323.4,431.1 L325.4,431.1 L327.8,435.1 L337.9,435.4 L338.9,436.7 L340.2,435.4 L349.6,435.4 L350.6,436.3 L355.7,436.3 L356.0,441.5 L357.7,444.9 L359.4,451.6 L360.0,454.9 L363.1,455.9 L364.7,456.9 L365.7,455.3 L367.8,456.6 L369.8,453.6 L370.4,455.6 L373.5,455.6 L374.8,451.6 L376.5,449.6 L378.5,450.9 L381.9,448.2 L383.2,449.9 L385.2,447.2 L390.3,444.5 L392.5,445.4 L395.5,445.4 L395.7,440.2 L402.2,440.2 L403.9,437.9 L405.5,440.9 L410.2,441.2 L410.6,442.4 L411.7,440.9 L411.8,436.4 L413.5,428.5 L415.2,431.9 L415.6,434.2 L419.4,434.2 L420.2,435.3 L420.6,428.5 L436.2,428.5 L438.3,437.1 L440.4,444.6 L441.6,449.2 L446.3,449.2 L448.8,446.2 L450.5,443.1 L452.1,444.3 L454.7,441.7 L458.0,439.0 L461.4,438.3 L466.0,438.3 L467.2,435.6 L468.9,428.5 L486.1,428.5 L487.7,437.9 L489.4,437.1 L493.6,437.1 L494.0,438.3 L497.8,438.3 L500.7,436.1 L502.8,438.3 L505.3,436.2 L508.3,436.8 L509.5,440.9 L510.8,442.0 L512.9,438.3 L515.4,436.4 L519.2,435.3 L521.7,434.5 L521.9,428.5 L526.1,428.5 L527.1,437.1 L533.0,437.1 L536.0,439.0 L536.8,441.2 L538.5,441.2 L539.7,435.6 L543.1,433.4 L545.6,434.5 L547.3,437.1 L549.8,438.3 L553.2,438.3 L557.4,436.1 L561.1,436.4 L563.7,438.3 L565.8,436.8 L572.5,436.4 L574.2,437.1 L575.0,431.2 L576.7,435.6 L578.4,431.2 L580.0,437.1 L581.7,431.9 L583.3,435.6 L584.5,437.1 L586.6,436.4 L587.9,437.5 L590.4,435.3 L591.7,435.3 L593.8,438.3 L595.9,438.3 L599.6,436.1 L602.2,436.4 L602.6,437.1 L612.6,437.1 L614.7,440.9 L617.3,440.5 L620.2,434.2 L622.3,438.3 L623.1,440.2 L624.8,436.8 L626.5,440.2 L627.8,436.8 L630.7,438.3 L634.1,436.4 L637.4,438.3 L640.8,437.1 L643.7,436.1 L645.0,437.1 L658.4,437.1 L659.7,440.9 L662.6,440.5 L665.1,440.2 L666.8,441.2 L668.1,441.2 L669.3,436.1 L673.1,436.4 L677.7,437.1 L679.4,438.3 L682.2,439.0 L683.5,438.3 L687.2,438.3 L688.5,439.4 L691.4,439.4 L692.7,438.3 L700.7,438.3 L701.5,437.0 L704.0,439.4 L706.5,438.7 L708.6,438.3 L709.9,439.4 L713.3,438.7 L716.2,437.9 L717.5,440.2 L718.7,439.0 L720.4,440.5 L720.8,501.6 L722.1,501.6 L722.9,446.9 L724.0,446.9 L724.6,501.6 L725.7,501.6 L726.5,442.4 L727.5,436.8 L729.6,438.3 L731.3,440.2 L733.4,441.2 L735.9,440.2 L746.0,440.2 L747.7,432.7 L749.4,432.7 L751.0,437.5 L753.1,441.2 L754.4,436.8 L756.5,436.8 L759.9,440.2 L761.1,438.3 L766.6,437.9 L767.8,436.8 L769.1,437.9 L776.5,438.3 L778.2,436.4 L779.5,436.8 L780.7,432.3 L783.2,434.2 L785.8,434.2 L787.0,431.5 L788.7,433.4 L790.4,434.2 L791.6,438.3 L795.4,437.1 L796.3,432.7 L797.5,432.3 L799.2,434.2 L800.9,436.8 L804.6,438.3 L807.2,441.2 L809.3,440.2 L812.2,438.7 L814.3,440.5 L816.8,438.3 L821.0,438.3 L821.9,437.1 L823.5,438.3 L828.6,438.3 L829.8,432.3 L834.0,432.3 L834.5,438.3 L837.0,437.5 L839.5,436.4 L842.0,436.4 L845.0,438.3 L867.6,438.3 L870.1,443.9 L872.9,443.9 L874.6,438.3 L878.8,438.3 L880.5,440.2 L883.4,440.2 L885.1,437.1 L888.1,437.1 L890.2,438.3 L891.8,436.8 L894.3,438.3 L898.1,437.1 L899.4,438.3 L908.6,438.3 L912.4,443.1 L915.3,437.1 L915.8,436.1 L922.1,436.1 L924.2,437.1 L927.5,436.1 L929.2,440.2 L931.7,436.1 L938.8,436.1 L941.0,437.1 L943.0,436.1 L949.3,436.1 L951.0,437.1 L954.4,437.1 L955.2,431.2 L956.1,436.1 L958.6,438.3 L961.9,438.3 L964.9,436.4 L965.7,437.9 L966.1,501.6 L970.2,501.6 L971.5,449.9 L972.3,451.8 L974.8,447.3 L976.1,449.2 L978.6,455.5 L980.7,455.2 L984.9,449.9 L986.6,443.6 L988.7,443.6 L992.0,442.8 L993.3,440.5 L996.2,440.2 L998.7,437.1 L1000.4,437.1 L1002.1,439.4 L1003.4,432.7 L1004.2,428.5 L1016.8,428.5 L1018.5,436.4 L1021.4,445.0 L1023.9,444.3 L1031.5,444.6 L1034.0,441.2 L1037.4,443.6 L1040.3,438.7 L1042.0,440.5 L1045.3,443.9 L1047.0,441.2 L1051.6,438.7 L1053.7,440.2 L1055.0,439.4 L1060.0,440.9 L1062.6,438.7 L1063.8,433.4 L1066.0,433.4 L1066.5,431.0 L1067.1,426.0 L1068.3,425.4 L1069.3,427.2 L1069.9,424.1 L1076.4,424.1 L1076.7,419.2 L1078.6,418.3 L1079.8,414.2 L1082.0,413.6 L1082.3,409.0 L1084.5,406.2 L1086.3,404.0 L1087.6,407.4 L1088.8,401.5 L1091.3,404.6 L1093.5,400.9 L1095.6,403.1 L1096.6,407.4 L1097.8,414.2 L1099.3,419.8 L1101.8,430.3 L1105.2,438.4 L1107.4,435.6 L1121.7,435.6 L1122.3,433.8 L1122.9,435.6 L1127.0,435.4 L1129.0,436.1 L1131.5,434.9 L1132.0,436.1 L1149.8,435.4 L1151.3,436.4 L1154.3,436.9 L1155.8,438.4 L1157.3,438.9 L1158.3,501.4 L1164.2,501.4 L1166.7,448.8 L1167.7,444.8 L1168.2,437.4 L1169.7,438.4 L1173.1,435.4 L1175.6,436.1 L1176.6,438.9 L1178.6,435.4 L1184.6,435.4 L1186.0,436.7 L1191.0,435.4 L1196.0,435.4 L1196.0,501.6 Z" fill="#c020c0" fill-opacity="0.10"/><path d="M86.5,445.8 L88.0,445.8 L89.0,444.4 L90.5,444.4 L91.0,445.3 L96.7,445.3 L97.7,501.4 L98.4,501.4 L99.7,456.8 L100.4,454.8 L101.9,445.8 L103.9,445.8 L105.3,447.3 L106.8,448.3 L107.6,449.8 L108.5,489.0 L109.3,450.8 L110.3,454.8 L111.0,451.8 L112.3,454.8 L113.8,449.8 L114.8,445.8 L116.8,445.3 L118.7,442.4 L119.9,443.9 L121.2,501.4 L123.2,501.4 L124.7,442.4 L125.5,441.9 L127.2,446.8 L128.7,446.3 L130.7,447.8 L132.4,446.8 L134.4,450.8 L136.6,446.8 L139.1,442.9 L141.1,442.4 L141.6,501.4 L142.1,442.4 L142.6,501.4 L143.6,441.4 L144.1,501.4 L145.5,501.4 L147.0,440.9 L148.0,439.9 L149.5,444.4 L150.5,443.9 L151.5,441.4 L154.5,440.9 L156.0,439.4 L157.5,436.9 L158.4,437.4 L159.2,501.4 L160.6,501.4 L161.7,440.9 L162.8,439.9 L163.8,441.4 L164.5,488.5 L165.0,501.4 L167.4,501.4 L168.4,439.9 L169.9,438.4 L171.7,440.4 L172.4,501.4 L176.4,501.4 L177.9,449.8 L178.4,452.3 L179.4,447.8 L180.8,442.9 L182.8,439.9 L183.6,438.4 L184.6,440.4 L189.6,440.9 L190.8,501.4 L193.3,501.4 L194.2,440.9 L195.7,438.4 L197.5,440.9 L201.2,441.4 L202.2,501.4 L208.6,501.4 L209.1,443.9 L210.4,442.4 L212.1,445.8 L213.1,501.4 L219.4,501.4 L221.5,442.9 L223.0,439.9 L224.7,433.4 L226.0,434.4 L228.5,439.9 L231.0,438.9 L233.0,435.4 L234.9,429.5 L238.3,430.0 L241.3,435.3 L248.1,435.8 L249.2,436.7 L253.4,436.7 L254.4,439.0 L256.6,435.3 L257.6,436.3 L259.2,444.8 L260.5,501.2 L262.9,501.2 L263.6,444.8 L266.6,442.7 L268.1,444.8 L270.0,450.6 L272.4,445.3 L273.9,444.5 L277.6,444.5 L279.2,440.6 L282.4,435.3 L284.5,435.6 L287.6,442.1 L289.8,435.8 L291.9,438.4 L293.4,435.8 L296.6,435.8 L298.2,436.7 L309.8,435.3 L311.4,433.2 L312.0,433.1 L313.3,435.8 L314.6,432.8 L315.4,435.4 L320.4,435.4 L320.7,432.1 L322.4,429.4 L323.4,431.1 L325.4,431.1 L327.8,435.1 L337.9,435.4 L338.9,436.7 L340.2,435.4 L349.6,435.4 L350.6,436.3 L355.7,436.3 L356.0,441.5 L357.7,444.9 L359.4,451.6 L360.0,454.9 L363.1,455.9 L364.7,456.9 L365.7,455.3 L367.8,456.6 L369.8,453.6 L370.4,455.6 L373.5,455.6 L374.8,451.6 L376.5,449.6 L378.5,450.9 L381.9,448.2 L383.2,449.9 L385.2,447.2 L390.3,444.5 L392.5,445.4 L395.5,445.4 L395.7,440.2 L402.2,440.2 L403.9,437.9 L405.5,440.9 L410.2,441.2 L410.6,442.4 L411.7,440.9 L411.8,436.4 L413.5,428.5 L415.2,431.9 L415.6,434.2 L419.4,434.2 L420.2,435.3 L420.6,428.5 L436.2,428.5 L438.3,437.1 L440.4,444.6 L441.6,449.2 L446.3,449.2 L448.8,446.2 L450.5,443.1 L452.1,444.3 L454.7,441.7 L458.0,439.0 L461.4,438.3 L466.0,438.3 L467.2,435.6 L468.9,428.5 L486.1,428.5 L487.7,437.9 L489.4,437.1 L493.6,437.1 L494.0,438.3 L497.8,438.3 L500.7,436.1 L502.8,438.3 L505.3,436.2 L508.3,436.8 L509.5,440.9 L510.8,442.0 L512.9,438.3 L515.4,436.4 L519.2,435.3 L521.7,434.5 L521.9,428.5 L526.1,428.5 L527.1,437.1 L533.0,437.1 L536.0,439.0 L536.8,441.2 L538.5,441.2 L539.7,435.6 L543.1,433.4 L545.6,434.5 L547.3,437.1 L549.8,438.3 L553.2,438.3 L557.4,436.1 L561.1,436.4 L563.7,438.3 L565.8,436.8 L572.5,436.4 L574.2,437.1 L575.0,431.2 L576.7,435.6 L578.4,431.2 L580.0,437.1 L581.7,431.9 L583.3,435.6 L584.5,437.1 L586.6,436.4 L587.9,437.5 L590.4,435.3 L591.7,435.3 L593.8,438.3 L595.9,438.3 L599.6,436.1 L602.2,436.4 L602.6,437.1 L612.6,437.1 L614.7,440.9 L617.3,440.5 L620.2,434.2 L622.3,438.3 L623.1,440.2 L624.8,436.8 L626.5,440.2 L627.8,436.8 L630.7,438.3 L634.1,436.4 L637.4,438.3 L640.8,437.1 L643.7,436.1 L645.0,437.1 L658.4,437.1 L659.7,440.9 L662.6,440.5 L665.1,440.2 L666.8,441.2 L668.1,441.2 L669.3,436.1 L673.1,436.4 L677.7,437.1 L679.4,438.3 L682.2,439.0 L683.5,438.3 L687.2,438.3 L688.5,439.4 L691.4,439.4 L692.7,438.3 L700.7,438.3 L701.5,437.0 L704.0,439.4 L706.5,438.7 L708.6,438.3 L709.9,439.4 L713.3,438.7 L716.2,437.9 L717.5,440.2 L718.7,439.0 L720.4,440.5 L720.8,501.6 L722.1,501.6 L722.9,446.9 L724.0,446.9 L724.6,501.6 L725.7,501.6 L726.5,442.4 L727.5,436.8 L729.6,438.3 L731.3,440.2 L733.4,441.2 L735.9,440.2 L746.0,440.2 L747.7,432.7 L749.4,432.7 L751.0,437.5 L753.1,441.2 L754.4,436.8 L756.5,436.8 L759.9,440.2 L761.1,438.3 L766.6,437.9 L767.8,436.8 L769.1,437.9 L776.5,438.3 L778.2,436.4 L779.5,436.8 L780.7,432.3 L783.2,434.2 L785.8,434.2 L787.0,431.5 L788.7,433.4 L790.4,434.2 L791.6,438.3 L795.4,437.1 L796.3,432.7 L797.5,432.3 L799.2,434.2 L800.9,436.8 L804.6,438.3 L807.2,441.2 L809.3,440.2 L812.2,438.7 L814.3,440.5 L816.8,438.3 L821.0,438.3 L821.9,437.1 L823.5,438.3 L828.6,438.3 L829.8,432.3 L834.0,432.3 L834.5,438.3 L837.0,437.5 L839.5,436.4 L842.0,436.4 L845.0,438.3 L867.6,438.3 L870.1,443.9 L872.9,443.9 L874.6,438.3 L878.8,438.3 L880.5,440.2 L883.4,440.2 L885.1,437.1 L888.1,437.1 L890.2,438.3 L891.8,436.8 L894.3,438.3 L898.1,437.1 L899.4,438.3 L908.6,438.3 L912.4,443.1 L915.3,437.1 L915.8,436.1 L922.1,436.1 L924.2,437.1 L927.5,436.1 L929.2,440.2 L931.7,436.1 L938.8,436.1 L941.0,437.1 L943.0,436.1 L949.3,436.1 L951.0,437.1 L954.4,437.1 L955.2,431.2 L956.1,436.1 L958.6,438.3 L961.9,438.3 L964.9,436.4 L965.7,437.9 L966.1,501.6 L970.2,501.6 L971.5,449.9 L972.3,451.8 L974.8,447.3 L976.1,449.2 L978.6,455.5 L980.7,455.2 L984.9,449.9 L986.6,443.6 L988.7,443.6 L992.0,442.8 L993.3,440.5 L996.2,440.2 L998.7,437.1 L1000.4,437.1 L1002.1,439.4 L1003.4,432.7 L1004.2,428.5 L1016.8,428.5 L1018.5,436.4 L1021.4,445.0 L1023.9,444.3 L1031.5,444.6 L1034.0,441.2 L1037.4,443.6 L1040.3,438.7 L1042.0,440.5 L1045.3,443.9 L1047.0,441.2 L1051.6,438.7 L1053.7,440.2 L1055.0,439.4 L1060.0,440.9 L1062.6,438.7 L1063.8,433.4 L1066.0,433.4 L1066.5,431.0 L1067.1,426.0 L1068.3,425.4 L1069.3,427.2 L1069.9,424.1 L1076.4,424.1 L1076.7,419.2 L1078.6,418.3 L1079.8,414.2 L1082.0,413.6 L1082.3,409.0 L1084.5,406.2 L1086.3,404.0 L1087.6,407.4 L1088.8,401.5 L1091.3,404.6 L1093.5,400.9 L1095.6,403.1 L1096.6,407.4 L1097.8,414.2 L1099.3,419.8 L1101.8,430.3 L1105.2,438.4 L1107.4,435.6 L1121.7,435.6 L1122.3,433.8 L1122.9,435.6 L1127.0,435.4 L1129.0,436.1 L1131.5,434.9 L1132.0,436.1 L1149.8,435.4 L1151.3,436.4 L1154.3,436.9 L1155.8,438.4 L1157.3,438.9 L1158.3,501.4 L1164.2,501.4 L1166.7,448.8 L1167.7,444.8 L1168.2,437.4 L1169.7,438.4 L1173.1,435.4 L1175.6,436.1 L1176.6,438.9 L1178.6,435.4 L1184.6,435.4 L1186.0,436.7 L1191.0,435.4 L1196.0,435.4" fill="none" stroke="#ff30ff" stroke-width="1.1"/></g><line x1="87.5" y1="-5" x2="87.5" y2="510" stroke="#dcdcdc" stroke-width="1"/><line x1="437.3" y1="-5" x2="437.3" y2="60" stroke="#2a2a2a" stroke-width="1.1"/><text transform="translate(41.8,49.0) rotate(-90)" x="-0.02" y="0" font-size="12.5" fill="#8a8a8a" textLength="41.95" lengthAdjust="spacingAndGlyphs">Aerobic</text><text transform="translate(41.8,160.5) rotate(-90)" x="-0.64" y="0" font-size="12.5" fill="#8a8a8a" textLength="54.17" lengthAdjust="spacingAndGlyphs">Glycolytic</text><text transform="translate(41.8,249.2) rotate(-90)" x="-0.89" y="0" font-size="12.5" fill="#8a8a8a" textLength="18.78" lengthAdjust="spacingAndGlyphs">PCr</text><text transform="translate(41.8,382.6) rotate(-90)" x="-0.99" y="0" font-size="12.5" fill="#8a8a8a" textLength="74.99" lengthAdjust="spacingAndGlyphs">MPA &amp; Power</text><text transform="translate(41.8,466.7) rotate(-90)" x="-0.57" y="0" font-size="12.5" fill="#8a8a8a" textLength="32.68" lengthAdjust="spacingAndGlyphs">Strain</text><text x="80.5" y="32" font-size="13.8" fill="#2a7cbc" font-weight="400" text-anchor="end" >117</text><text x="80.5" y="71.9" font-size="12" fill="#8a8a8a" font-weight="400" text-anchor="end" >0</text><text x="80.5" y="95.5" font-size="12" fill="#8a8a8a" font-weight="400" text-anchor="end" >0</text><text x="80.5" y="138.0" font-size="15" fill="#e01a62" font-weight="400" text-anchor="end" >0</text><text x="80.5" y="177.5" font-size="12" fill="#8a8a8a" font-weight="400" text-anchor="end" >0</text><text x="80.5" y="202.8" font-size="12" fill="#8a8a8a" font-weight="400" text-anchor="end" >0</text><text x="80.5" y="244.2" font-size="15" fill="#6a3fc0" font-weight="400" text-anchor="end" >0</text><text x="80.5" y="283.5" font-size="12" fill="#8a8a8a" font-weight="400" text-anchor="end" >0</text><text x="80.5" y="307" font-size="12" fill="#8a8a8a" font-weight="400" text-anchor="end" >500</text><text x="80.5" y="340.9" font-size="13.5" fill="#f07800" font-weight="400" text-anchor="end" >500</text><text x="80.5" y="356.4" font-size="13.5" fill="#6a3fc0" font-weight="400" text-anchor="end" >117</text><text x="80.5" y="388.5" font-size="12" fill="#8a8a8a" font-weight="400" text-anchor="end" >0</text><text x="80.5" y="413.1" font-size="12" fill="#8a8a8a" font-weight="400" text-anchor="end" >55</text><text x="80.5" y="454.8" font-size="13.5" fill="#e010e0" font-weight="400" text-anchor="end" >39</text><text x="80.5" y="495" font-size="12" fill="#8a8a8a" font-weight="400" text-anchor="end" >0</text><line x1="163.5" y1="510.7" x2="163.5" y2="517.3" stroke="#9e9e9e" stroke-width="1"/><text x="163.5" y="530.3" font-size="13.3" fill="#9a9a9a" font-weight="400" text-anchor="middle" >0:05</text><line x1="239.4" y1="510.7" x2="239.4" y2="517.3" stroke="#9e9e9e" stroke-width="1"/><text x="239.4" y="530.3" font-size="13.3" fill="#9a9a9a" font-weight="400" text-anchor="middle" >0:10</text><line x1="315.4" y1="510.7" x2="315.4" y2="517.3" stroke="#9e9e9e" stroke-width="1"/><text x="315.4" y="530.3" font-size="13.3" fill="#9a9a9a" font-weight="400" text-anchor="middle" >0:15</text><line x1="391.3" y1="510.7" x2="391.3" y2="517.3" stroke="#9e9e9e" stroke-width="1"/><text x="391.3" y="530.3" font-size="13.3" fill="#9a9a9a" font-weight="400" text-anchor="middle" >0:20</text><line x1="467.3" y1="510.7" x2="467.3" y2="517.3" stroke="#9e9e9e" stroke-width="1"/><text x="467.3" y="530.3" font-size="13.3" fill="#9a9a9a" font-weight="400" text-anchor="middle" >0:25</text><line x1="543.2" y1="510.7" x2="543.2" y2="517.3" stroke="#9e9e9e" stroke-width="1"/><text x="543.2" y="530.3" font-size="13.3" fill="#9a9a9a" font-weight="400" text-anchor="middle" >0:30</text><line x1="619.1" y1="510.7" x2="619.1" y2="517.3" stroke="#9e9e9e" stroke-width="1"/><text x="619.1" y="530.3" font-size="13.3" fill="#9a9a9a" font-weight="400" text-anchor="middle" >0:35</text><line x1="695.1" y1="510.7" x2="695.1" y2="517.3" stroke="#9e9e9e" stroke-width="1"/><text x="695.1" y="530.3" font-size="13.3" fill="#9a9a9a" font-weight="400" text-anchor="middle" >0:40</text><line x1="771.0" y1="510.7" x2="771.0" y2="517.3" stroke="#9e9e9e" stroke-width="1"/><text x="771.0" y="530.3" font-size="13.3" fill="#9a9a9a" font-weight="400" text-anchor="middle" >0:45</text><line x1="847.0" y1="510.7" x2="847.0" y2="517.3" stroke="#9e9e9e" stroke-width="1"/><text x="847.0" y="530.3" font-size="13.3" fill="#9a9a9a" font-weight="400" text-anchor="middle" >0:50</text><line x1="922.9" y1="510.7" x2="922.9" y2="517.3" stroke="#9e9e9e" stroke-width="1"/><text x="922.9" y="530.3" font-size="13.3" fill="#9a9a9a" font-weight="400" text-anchor="middle" >0:55</text><line x1="998.8" y1="510.7" x2="998.8" y2="517.3" stroke="#9e9e9e" stroke-width="1"/><text x="998.8" y="530.3" font-size="13.3" fill="#9a9a9a" font-weight="400" text-anchor="middle" >1:00</text><line x1="1074.8" y1="510.7" x2="1074.8" y2="517.3" stroke="#9e9e9e" stroke-width="1"/><text x="1074.8" y="530.3" font-size="13.3" fill="#9a9a9a" font-weight="400" text-anchor="middle" >1:05</text><line x1="1150.7" y1="510.7" x2="1150.7" y2="517.3" stroke="#9e9e9e" stroke-width="1"/><text x="1150.7" y="530.3" font-size="13.3" fill="#9a9a9a" font-weight="400" text-anchor="middle" >1:10</text><line x1="1226.7" y1="510.7" x2="1226.7" y2="517.3" stroke="#9e9e9e" stroke-width="1"/><text x="1226.7" y="530.3" font-size="13.3" fill="#9a9a9a" font-weight="400" text-anchor="middle" >1:15</text><text x="36.07" y="530.3" font-size="13.3" fill="#222" font-weight="400" textLength="45.21" lengthAdjust="spacingAndGlyphs" >0:23:02</text><text x="28.32" y="551" font-size="13.3" fill="#9a9a9a" font-weight="400" textLength="52.87" lengthAdjust="spacingAndGlyphs" >22:57:08</text><rect x="87.5" y="536.5" width="103.5" height="21" rx="2" fill="#fff" fill-opacity="0.18"/><text x="96.12" y="551" font-size="13" fill="#9a9a9a" font-weight="400" stroke="#9a9a9a" stroke-width="0.25" textLength="70.76" lengthAdjust="spacingAndGlyphs" >INTERVALS</text><path d="M173.5,550.5 L178.6,545 L183.7,550.5 Z" fill="#9a9a9a"/><line x1="20" y1="562.7" x2="1195" y2="562.7" stroke="#e2e2e2" stroke-width="1"/><rect x="20.5" y="571.7" width="1180" height="41" fill="#000" fill-opacity="0.03"/><rect x="28.5" y="572.3" width="309" height="40.5" rx="4" fill="none" stroke="#e6e6e6" stroke-width="1"/><rect x="94.1" y="572.3" width="91.7" height="40.5" fill="#000" fill-opacity="0.10"/><text x="43.05" y="597.9" font-size="13" fill="#000" font-weight="400" stroke="#000" stroke-width="0.5" textLength="37.79" lengthAdjust="spacingAndGlyphs" >WORK</text><text x="108.34" y="597.9" font-size="13" fill="#000" font-weight="400" stroke="#000" stroke-width="0.5" textLength="64.64" lengthAdjust="spacingAndGlyphs" >SELECTED</text><text x="203.77" y="597.9" font-size="13" fill="#000" font-weight="400" stroke="#000" stroke-width="0.5" textLength="23.16" lengthAdjust="spacingAndGlyphs" >ALL</text><text x="256.72" y="597.9" font-size="13" fill="#000" font-weight="400" stroke="#000" stroke-width="0.5" textLength="67.35" lengthAdjust="spacingAndGlyphs" >RECOVERY</text><text x="351.38" y="597.9" font-size="13" fill="#2a2a2a" font-weight="400" stroke="#2a2a2a" stroke-width="0.5" textLength="47.74" lengthAdjust="spacingAndGlyphs" >FIELDS</text><rect x="31" y="630" width="13" height="13" rx="2" fill="none" stroke="#6a6a6a" stroke-width="1.6"/><text x="107.37" y="641.2" font-size="13.6" fill="#666" font-weight="400" stroke="#666" stroke-width="0.3" textLength="33.75" lengthAdjust="spacingAndGlyphs" >Label</text><text x="188.49" y="641.2" font-size="13.6" fill="#666" font-weight="400" stroke="#666" stroke-width="0.3" textLength="82.51" lengthAdjust="spacingAndGlyphs" >Elapsed Time</text><text x="324.25" y="641.2" font-size="13.6" fill="#666" font-weight="400" stroke="#666" stroke-width="0.3" textLength="54.47" lengthAdjust="spacingAndGlyphs" >Distance</text><text x="1064.58" y="641.2" font-size="13.6" fill="#666" font-weight="400" stroke="#666" stroke-width="0.3" textLength="61.64" lengthAdjust="spacingAndGlyphs" >Avg Power</text><text x="1180.8" y="641.6" font-size="13.6" fill="#666" font-weight="400" text-anchor="start" stroke="#666" stroke-width="0.3">Avg</text><line x1="20" y1="650.4" x2="1195" y2="650.4" stroke="#dcdcdc" stroke-width="1"/><rect x="20.5" y="650.9" width="1180" height="47.3" fill="#000" fill-opacity="0.05"/><text x="63.97" y="669.9" font-size="14.5" fill="#1a1a1a" font-weight="400" stroke="#1a1a1a" stroke-width="0.2" textLength="23.19" lengthAdjust="spacingAndGlyphs" >Avg</text><path d="M69.5,683.5 L79,683.5 L74.25,688.5 Z" fill="#222"/><line x1="20" y1="698.4" x2="1195" y2="698.4" stroke="#dcdcdc" stroke-width="1"/><text x="56.69" y="716.8" font-size="14.5" fill="#1a1a1a" font-weight="400" stroke="#1a1a1a" stroke-width="0.2" textLength="30.53" lengthAdjust="spacingAndGlyphs" >Total</text><text x="155.35" y="758.8" font-size="16" fill="#1976d2" font-weight="400" stroke="#1976d2" stroke-width="0.6" textLength="35.61" lengthAdjust="spacingAndGlyphs" >MAP</text><text x="229.44" y="758.8" font-size="16" fill="#1976d2" font-weight="400" stroke="#1976d2" stroke-width="0.6" textLength="61.65" lengthAdjust="spacingAndGlyphs" >CHARTS</text><text x="349.80" y="758.8" font-size="16" fill="#1976d2" font-weight="400" stroke="#1976d2" stroke-width="0.6" textLength="51.27" lengthAdjust="spacingAndGlyphs" >FIELDS</text><text x="460.09" y="758.8" font-size="16" fill="#1976d2" font-weight="400" stroke="#1976d2" stroke-width="0.6" textLength="67.19" lengthAdjust="spacingAndGlyphs" >OPTIONS</text><text x="587.07" y="758.8" font-size="16" fill="#1976d2" font-weight="400" stroke="#1976d2" stroke-width="0.6" textLength="133.26" lengthAdjust="spacingAndGlyphs" >ADD INTERVAL (A)</text><text x="759.01" y="758.8" font-size="16" fill="#1976d2" font-weight="400" stroke="#1976d2" stroke-width="0.6" textLength="66.53" lengthAdjust="spacingAndGlyphs" >SPLIT (S)</text><text x="863.46" y="758.8" font-size="16" fill="#1976d2" font-weight="400" stroke="#1976d2" stroke-width="0.6" textLength="82.38" lengthAdjust="spacingAndGlyphs" >MERGE (M)</text><text x="984.07" y="758.8" font-size="16" fill="#1976d2" font-weight="400" stroke="#1976d2" stroke-width="0.6" textLength="54.37" lengthAdjust="spacingAndGlyphs" >DEL (D)</text><text x="1077.13" y="758.8" font-size="16" fill="#1976d2" font-weight="400" stroke="#1976d2" stroke-width="0.6" textLength="66.02" lengthAdjust="spacingAndGlyphs" >CUSTOM</text><path d="M296.45,750.4 L304.45,750.4 L300.45,754.6 Z" fill="#1976d2"/><path d="M406.8,750.4 L414.8,750.4 L410.8,754.6 Z" fill="#1976d2"/><path d="M532.7,750.4 L540.7,750.4 L536.7,754.6 Z" fill="#1976d2"/><path d="M1147.8,750.4 L1155.8,750.4 L1151.8,754.6 Z" fill="#1976d2"/></svg>
<div id="ov"></div>
<div id="dlg"><svg width="675" height="622" viewBox="0 0 675 622" style="display:block;font-family:'Liberation Sans', sans-serif"><rect x="0" y="0" width="675" height="54" fill="#1976d2"/><text x="16.82" y="33.7" font-size="24" fill="#fff" font-weight="400" stroke="#fff" stroke-width="0.25" textLength="140.60" lengthAdjust="spacingAndGlyphs" >Interval Fields</text><line x1="337.2" y1="42" x2="431" y2="42" stroke="#fff" stroke-opacity="0.6" stroke-width="1"/><path transform="translate(448.8,15.3) scale(1.0)" d="M9.5,3A6.5,6.5 0 0,1 16,9.5C16,11.11 15.41,12.59 14.44,13.73L14.71,14H15.5L20.5,19L19,20.5L14,15.5V14.71L13.73,14.44C12.59,15.41 11.11,16 9.5,16A6.5,6.5 0 0,1 3,9.5A6.5,6.5 0 0,1 9.5,3M9.5,5C7,5 5,7 5,9.5C5,12 7,14 9.5,14C12,14 14,12 14,9.5C14,7 12,5 9.5,5Z" fill="#fff" fill-opacity="0.75"/><path d="M489.1,30 L495.2,24.1 L501.3,30" fill="none" stroke="#fff" stroke-width="2.5"/><path d="M533.9,24.5 L540,30.4 L546.1,24.5" fill="none" stroke="#fff" stroke-width="2.5"/><text x="581.37" y="31.7" font-size="16" fill="#fff" font-weight="700" textLength="73.77" lengthAdjust="spacingAndGlyphs" >DEFAULTS</text><rect x="656" y="62.8" width="19" height="490.2" fill="#fafafa"/><path d="M659.3,78.6 L665.6,69 L671.9,78.6 Z" fill="#909090"/><path d="M659.4,537.8 L672.2,537.8 L665.8,548.2 Z" fill="#909090"/><rect x="660.2" y="85.7" width="10.6" height="59" rx="5.3" fill="#8f8f8f"/><rect x="15.2" y="71" width="19" height="19" rx="2.5" fill="#82b1ff"/><path d="M18.0,80.3 L22.6,84.7 L31.5,75.6" fill="none" stroke="#fff" stroke-width="1.9"/><text x="46.68" y="84.8" font-size="14.5" fill="#222" font-weight="400" stroke="#222" stroke-width="0.18" textLength="57.67" lengthAdjust="spacingAndGlyphs" >Distance</text><rect x="15.2" y="107" width="19" height="19" rx="2.5" fill="#82b1ff"/><path d="M18.0,116.3 L22.6,120.7 L31.5,111.6" fill="none" stroke="#fff" stroke-width="1.9"/><text x="46.69" y="120.8" font-size="14.5" fill="#222" font-weight="400" stroke="#222" stroke-width="0.18" textLength="33.56" lengthAdjust="spacingAndGlyphs" >Pace</text><text x="223.60" y="120.8" font-size="14.5" fill="#222" font-weight="400" stroke="#222" stroke-width="0.18" textLength="61.68" lengthAdjust="spacingAndGlyphs" >/distance</text><text x="330.50" y="120.8" font-size="14.5" fill="#222" font-weight="400" stroke="#222" stroke-width="0.18" textLength="33.35" lengthAdjust="spacingAndGlyphs" >Pace</text><rect x="15.2" y="143" width="19" height="19" rx="2.5" fill="#82b1ff"/><path d="M18.0,152.3 L22.6,156.7 L31.5,147.6" fill="none" stroke="#fff" stroke-width="1.9"/><text x="47.19" y="156.8" font-size="14.5" fill="#222" font-weight="400" stroke="#222" stroke-width="0.18" textLength="29.75" lengthAdjust="spacingAndGlyphs" >GAP</text><text x="223.60" y="156.8" font-size="14.5" fill="#222" font-weight="400" stroke="#222" stroke-width="0.18" textLength="61.68" lengthAdjust="spacingAndGlyphs" >/distance</text><text x="330.97" y="156.8" font-size="14.5" fill="#222" font-weight="400" stroke="#222" stroke-width="0.18" textLength="149.97" lengthAdjust="spacingAndGlyphs" >Gradient adjusted pace</text><rect x="15.2" y="180" width="19" height="19" rx="2.5" fill="#82b1ff"/><path d="M18.0,189.3 L22.6,193.7 L31.5,184.6" fill="none" stroke="#fff" stroke-width="1.9"/><text x="47.00" y="193.4" font-size="14.5" fill="#222" font-weight="400" stroke="#222" stroke-width="0.18" textLength="62.46" lengthAdjust="spacingAndGlyphs" >Gap (RW)</text><path transform="translate(626.3,180.5) scale(0.7999999999999999)" d="M20.71,7.04C21.1,6.65 21.1,6 20.71,5.63L18.37,3.29C18,2.9 17.35,2.9 16.96,3.29L15.12,5.12L18.87,8.87M3,17.25V21H6.75L17.81,9.93L14.06,6.18L3,17.25Z" fill="#bdbdbd" fill-opacity="1"/><rect x="15.2" y="218" width="19" height="19" rx="2.5" fill="#82b1ff"/><path d="M18.0,227.3 L22.6,231.7 L31.5,222.6" fill="none" stroke="#fff" stroke-width="1.9"/><text x="46.68" y="231.6" font-size="14.5" fill="#222" font-weight="400" stroke="#222" stroke-width="0.18" textLength="73.48" lengthAdjust="spacingAndGlyphs" >Effort Pace</text><path transform="translate(626.3,218.7) scale(0.7999999999999999)" d="M20.71,7.04C21.1,6.65 21.1,6 20.71,5.63L18.37,3.29C18,2.9 17.35,2.9 16.96,3.29L15.12,5.12L18.87,8.87M3,17.25V21H6.75L17.81,9.93L14.06,6.18L3,17.25Z" fill="#bdbdbd" fill-opacity="1"/><rect x="15.2" y="256.8" width="19" height="19" rx="2.5" fill="#82b1ff"/><path d="M18.0,266.1 L22.6,270.5 L31.5,261.4" fill="none" stroke="#fff" stroke-width="1.9"/><text x="46.74" y="269.8" font-size="14.5" fill="#222" font-weight="400" stroke="#222" stroke-width="0.18" textLength="86.59" lengthAdjust="spacingAndGlyphs" >Run Cadence</text><text x="223.57" y="269.8" font-size="14.5" fill="#222" font-weight="400" stroke="#222" stroke-width="0.18" textLength="29.15" lengthAdjust="spacingAndGlyphs" >spm</text><path transform="translate(626.3,256.6) scale(0.7999999999999999)" d="M20.71,7.04C21.1,6.65 21.1,6 20.71,5.63L18.37,3.29C18,2.9 17.35,2.9 16.96,3.29L15.12,5.12L18.87,8.87M3,17.25V21H6.75L17.81,9.93L14.06,6.18L3,17.25Z" fill="#bdbdbd" fill-opacity="1"/><rect x="15.2" y="294.2" width="19" height="19" rx="2.5" fill="#82b1ff"/><path d="M18.0,303.5 L22.6,307.9 L31.5,298.8" fill="none" stroke="#fff" stroke-width="1.9"/><text x="47.67" y="307.1" font-size="14.5" fill="#222" font-weight="400" stroke="#222" stroke-width="0.18" textLength="47.77" lengthAdjust="spacingAndGlyphs" >Avg HR</text><text x="222.99" y="307.1" font-size="14.5" fill="#222" font-weight="400" stroke="#222" stroke-width="0.18" textLength="30.33" lengthAdjust="spacingAndGlyphs" >bpm</text><text x="331.27" y="307.1" font-size="14.5" fill="#222" font-weight="400" stroke="#222" stroke-width="0.18" textLength="115.07" lengthAdjust="spacingAndGlyphs" >Average heartrate</text><rect x="15.2" y="330.5" width="19" height="19" rx="2.5" fill="#82b1ff"/><path d="M18.0,339.8 L22.6,344.2 L31.5,335.1" fill="none" stroke="#fff" stroke-width="1.9"/><text x="47.67" y="343.0" font-size="14.5" fill="#222" font-weight="400" stroke="#222" stroke-width="0.18" textLength="68.56" lengthAdjust="spacingAndGlyphs" >Avg Power</text><text x="223.82" y="343.0" font-size="14.5" fill="#222" font-weight="400" stroke="#222" stroke-width="0.18" textLength="10.24" lengthAdjust="spacingAndGlyphs" >w</text><text x="331.27" y="343.0" font-size="14.5" fill="#222" font-weight="400" stroke="#222" stroke-width="0.18" textLength="95.56" lengthAdjust="spacingAndGlyphs" >Average power</text><rect x="15.2" y="367" width="19" height="19" rx="2.5" fill="#82b1ff"/><path d="M18.0,376.3 L22.6,380.7 L31.5,371.6" fill="none" stroke="#fff" stroke-width="1.9"/><text x="46.72" y="379.2" font-size="14.5" fill="#222" font-weight="400" stroke="#222" stroke-width="0.18" textLength="43.86" lengthAdjust="spacingAndGlyphs" >RunEff</text><text x="222.28" y="379.2" font-size="14.5" fill="#222" font-weight="400" stroke="#222" stroke-width="0.18" textLength="81.23" lengthAdjust="spacingAndGlyphs" >meters/beat</text><path transform="translate(626.3,366.4) scale(0.7999999999999999)" d="M20.71,7.04C21.1,6.65 21.1,6 20.71,5.63L18.37,3.29C18,2.9 17.35,2.9 16.96,3.29L15.12,5.12L18.87,8.87M3,17.25V21H6.75L17.81,9.93L14.06,6.18L3,17.25Z" fill="#bdbdbd" fill-opacity="1"/><path transform="translate(333.3,364.7) scale(0.9166666666666666)" d="M11,18H13V16H11V18M12,2A10,10 0 0,0 2,12A10,10 0 0,0 12,22A10,10 0 0,0 22,12A10,10 0 0,0 12,2M12,20C7.59,20 4,16.41 4,12C4,7.59 7.590,4 12,4C16.41,4 20,7.59 20,12C20,16.41 16.41,20 12,20M12,6A4,4 0 0,0 8,10H10A2,2 0 0,1 12,8A2,2 0 0,1 14,10C14,12 11,11.75 11,15H13C13,12.75 16,12.5 16,10A4,4 0 0,0 12,6Z" fill="#bdbdbd" fill-opacity="1"/><rect x="15.2" y="415.1" width="19" height="19" rx="2.5" fill="#82b1ff"/><path d="M18.0,424.4 L22.6,428.8 L31.5,419.7" fill="none" stroke="#fff" stroke-width="1.9"/><text x="47.87" y="416.8" font-size="14.5" fill="#222" font-weight="400" stroke="#222" stroke-width="0.18" textLength="134.36" lengthAdjust="spacingAndGlyphs" >Avg Respiration Rate</text><text x="46.71" y="439.0" font-size="14.5" fill="#222" font-weight="400" stroke="#222" stroke-width="0.18" textLength="75.39" lengthAdjust="spacingAndGlyphs" >(alphaHRV)</text><text x="223.32" y="427.9" font-size="14.5" fill="#222" font-weight="400" stroke="#222" stroke-width="0.18" textLength="34.68" lengthAdjust="spacingAndGlyphs" >brpm</text><path transform="translate(626.3,414.4) scale(0.7999999999999999)" d="M20.71,7.04C21.1,6.65 21.1,6 20.71,5.63L18.37,3.29C18,2.9 17.35,2.9 16.96,3.29L15.12,5.12L18.87,8.87M3,17.25V21H6.75L17.81,9.93L14.06,6.18L3,17.25Z" fill="#bdbdbd" fill-opacity="1"/><rect x="16.2" y="462.3" width="17" height="17" rx="2" fill="none" stroke="#777" stroke-width="2"/><text x="47.03" y="474.8" font-size="14.5" fill="#222" font-weight="400" stroke="#222" stroke-width="0.18" textLength="70.82" lengthAdjust="spacingAndGlyphs" >Start Index</text><rect x="16.2" y="498.2" width="17" height="17" rx="2" fill="none" stroke="#777" stroke-width="2"/><text x="46.74" y="510.7" font-size="14.5" fill="#222" font-weight="400" stroke="#222" stroke-width="0.18" textLength="63.61" lengthAdjust="spacingAndGlyphs" >End Index</text><rect x="16.2" y="534.3" width="17" height="17" rx="2" fill="none" stroke="#777" stroke-width="2"/><text x="47.03" y="546.9" font-size="14.5" fill="#222" font-weight="400" stroke="#222" stroke-width="0.18" textLength="68.54" lengthAdjust="spacingAndGlyphs" >Start Time</text><line x1="0" y1="561.5" x2="675" y2="561.5" stroke="#e0e0e0" stroke-width="1"/><text x="19.87" y="597.5" font-size="16" fill="#1976d2" font-weight="400" stroke="#1976d2" stroke-width="0.7" textLength="75.42" lengthAdjust="spacingAndGlyphs" >ADD FIELD</text><path transform="translate(122.6,582.8) scale(0.7708333333333334)" d="M9.5,3A6.5,6.5 0 0,1 16,9.5C16,11.11 15.41,12.59 14.44,13.73L14.71,14H15.5L20.5,19L19,20.5L14,15.5V14.71L13.73,14.44C12.59,15.41 11.11,16 9.5,16A6.5,6.5 0 0,1 3,9.5A6.5,6.5 0 0,1 9.5,3M9.5,5C7,5 5,7 5,9.5C5,12 7,14 9.5,14C12,14 14,12 14,9.5C14,7 12,5 9.5,5Z" fill="#1976d2" fill-opacity="1"/><text x="143.52" y="597.5" font-size="16" fill="#1976d2" font-weight="400" stroke="#1976d2" stroke-width="0.7" textLength="40.77" lengthAdjust="spacingAndGlyphs" >FIELD</text><text x="606.78" y="597.6" font-size="16" fill="#1976d2" font-weight="400" stroke="#1976d2" stroke-width="0.7" textLength="47.93" lengthAdjust="spacingAndGlyphs" >CLOSE</text></svg></div>
<svg id="hl" width="1191" height="806" style="position:absolute;left:0;top:0;mix-blend-mode:multiply"><path d="M338,741 L344.8,739.8 L353.1,736.8 L360,734.9 L377.3,734.5 L404.5,735.3 L410.6,736.8 L418.1,737.6 L418.1,757.2 L410.6,756.1 L400.8,755.3 L380.4,754.9 L360,756.1 L350.1,758.7 L342.6,760.6 L338,761 Z" fill="#ffff00"/></svg>
<div id="bar"></div>
</body></html>
